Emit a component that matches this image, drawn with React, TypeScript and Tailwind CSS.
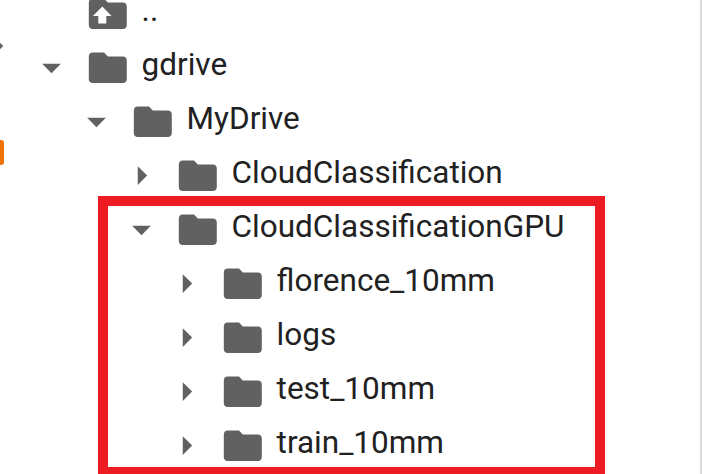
type Entry = { name: string; pad: string; state: 'open' | 'closed' | 'none' };

const entries: Entry[] = [
  { name: '..', pad: 'pl-[29px]', state: 'none' },
  { name: 'gdrive', pad: 'pl-[29px]', state: 'open' },
  { name: 'MyDrive', pad: 'pl-[74px]', state: 'open' },
  { name: 'CloudClassification', pad: 'pl-[119px]', state: 'closed' },
  { name: 'CloudClassificationGPU', pad: 'pl-[119px]', state: 'open' },
  { name: 'florence_10mm', pad: 'pl-[164px]', state: 'closed' },
  { name: 'logs', pad: 'pl-[164px]', state: 'closed' },
  { name: 'test_10mm', pad: 'pl-[164px]', state: 'closed' },
  { name: 'train_10mm', pad: 'pl-[164px]', state: 'closed' },
];

function Arrow({ state }: { state: Entry['state'] }) {
  return (
    <svg viewBox="0 0 24 24" className="size-[45px] shrink-0 fill-[#616161]">
      {state === 'open' && <path d="M7 10l5 5 5-5z" />}
      {state === 'closed' && <path d="M10 17l5-5-5-5z" />}
    </svg>
  );
}

function Folder({ up }: { up: boolean }) {
  return (
    <svg viewBox="0 0 24 24" className="mt-[1px] ml-[10.6px] size-[45.6px] shrink-0 fill-[#616161]">
      <path d="M10 4H4c-1.1 0-1.99.9-1.99 2L2 18c0 1.1.9 2 2 2h16c1.1 0 2-.9 2-2V8c0-1.1-.9-2-2-2h-8l-2-2z" />
      {up && <path className="fill-white" d="M9.1 8.1L4.2 13.1H7V17.1h4.2v-4H14z" />}
    </svg>
  );
}

export default function App() {
  return (
    <div className="relative flex h-[474px] w-[712px] overflow-hidden bg-white font-['Roboto',sans-serif] text-[#212121]">
      <main className="h-full w-[702px] border-r-2 border-[#dadada]">
        <ul className="-mt-[14px]">
          {entries.map((entry) => (
            <li key={entry.name} className={`flex h-[54px] items-center ${entry.pad}`}>
              <Arrow state={entry.state} />
              <Folder up={entry.state === 'none'} />
              <span className="-mt-[4px] ml-[11.4px] text-[31.5px] leading-[22px] whitespace-nowrap">{entry.name}</span>
            </li>
          ))}
        </ul>
      </main>
      <div className="absolute top-[43px] -left-[4px] size-[6px] rotate-45 bg-[#616161]" />
      <div className="absolute top-[140px] -left-[10px] h-[25px] w-[14px] rounded-[3px] bg-[#ed7208]" />
      <div className="absolute top-[196px] left-[98px] h-[281px] w-[507px] border-10 border-[#ed1c24]" />
    </div>
  );
}
